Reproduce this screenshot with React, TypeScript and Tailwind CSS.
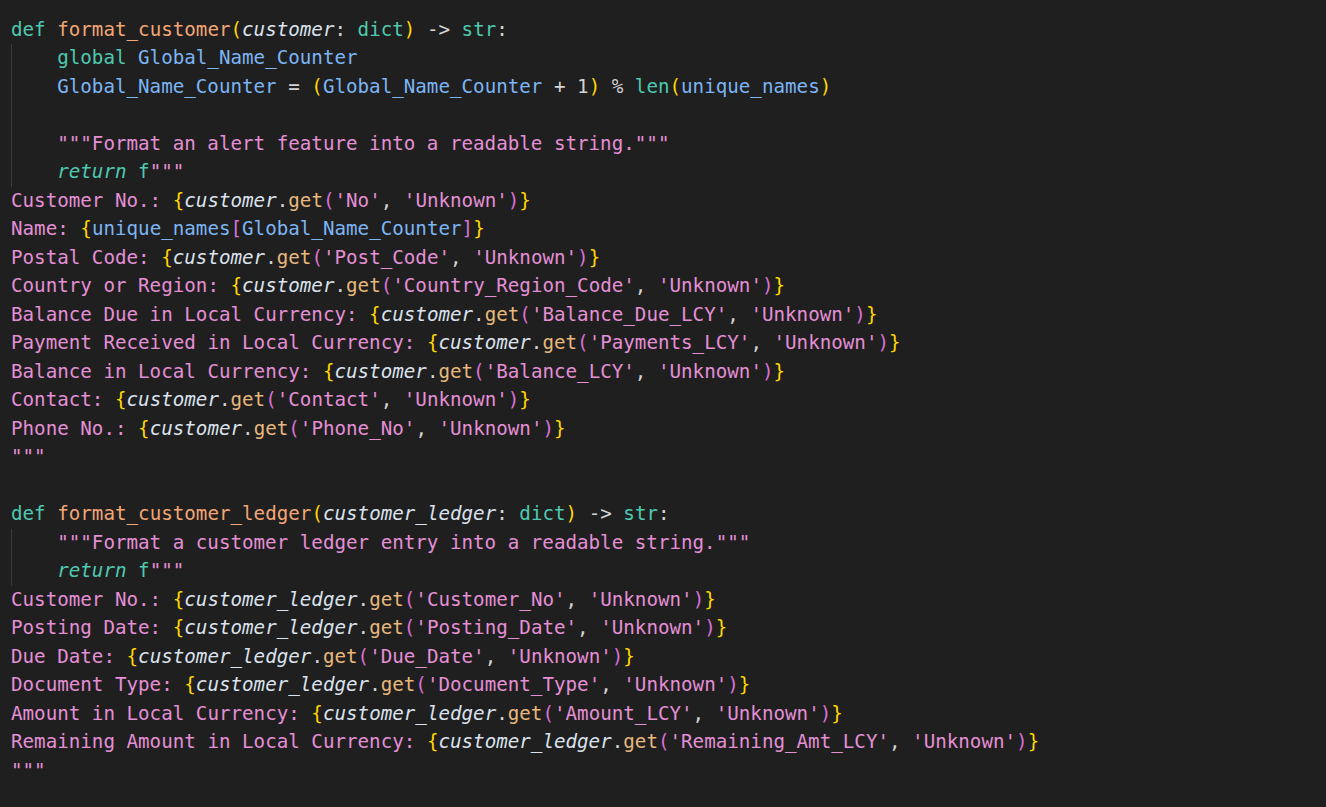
const c = {
  kw: 'text-[#4ec9b0]',
  kwi: 'text-[#4ec9b0] italic',
  fn: 'text-[#f3a675]',
  param: 'text-[#dbe2ee] italic',
  v: 'text-[#7cb5f4]',
  s: 'text-[#e48fd6]',
  y: 'text-[#ffd700]',
  p: 'text-[#da70d6]',
  op: 'text-[#d4d4d4]',
  m: 'text-[#e7b77c]',
}

type Tok = [string, string]
type Line = { indent?: boolean; toks: Tok[] }

const field = (label: string, obj: string, key: string): Line => ({
  toks: [
    [c.s, label + ': '],
    [c.y, '{'],
    [c.param, obj],
    [c.op, '.'],
    [c.m, 'get'],
    [c.p, '('],
    [c.s, `'${key}'`],
    [c.op, ', '],
    [c.s, "'Unknown'"],
    [c.p, ')'],
    [c.y, '}'],
  ],
})

const lines: Line[] = [
  {
    toks: [
      [c.kw, 'def '],
      [c.fn, 'format_customer'],
      [c.y, '('],
      [c.param, 'customer'],
      [c.op, ': '],
      [c.kw, 'dict'],
      [c.y, ')'],
      [c.op, ' -> '],
      [c.kw, 'str'],
      [c.op, ':'],
    ],
  },
  { indent: true, toks: [[c.kw, 'global '], [c.v, 'Global_Name_Counter']] },
  {
    indent: true,
    toks: [
      [c.v, 'Global_Name_Counter'],
      [c.op, ' = '],
      [c.y, '('],
      [c.v, 'Global_Name_Counter'],
      [c.op, ' + '],
      [c.op, '1'],
      [c.y, ')'],
      [c.op, ' % '],
      [c.kw, 'len'],
      [c.y, '('],
      [c.v, 'unique_names'],
      [c.y, ')'],
    ],
  },
  { indent: true, toks: [] },
  { indent: true, toks: [[c.s, '"""Format an alert feature into a readable string."""']] },
  { indent: true, toks: [[c.kwi, 'return'], [c.op, ' '], [c.kw, 'f'], [c.s, '"""']] },
  field('Customer No.', 'customer', 'No'),
  {
    toks: [
      [c.s, 'Name: '],
      [c.y, '{'],
      [c.v, 'unique_names'],
      [c.p, '['],
      [c.v, 'Global_Name_Counter'],
      [c.p, ']'],
      [c.y, '}'],
    ],
  },
  field('Postal Code', 'customer', 'Post_Code'),
  field('Country or Region', 'customer', 'Country_Region_Code'),
  field('Balance Due in Local Currency', 'customer', 'Balance_Due_LCY'),
  field('Payment Received in Local Currency', 'customer', 'Payments_LCY'),
  field('Balance in Local Currency', 'customer', 'Balance_LCY'),
  field('Contact', 'customer', 'Contact'),
  field('Phone No.', 'customer', 'Phone_No'),
  { toks: [[c.s, '"""']] },
  { toks: [] },
  {
    toks: [
      [c.kw, 'def '],
      [c.fn, 'format_customer_ledger'],
      [c.y, '('],
      [c.param, 'customer_ledger'],
      [c.op, ': '],
      [c.kw, 'dict'],
      [c.y, ')'],
      [c.op, ' -> '],
      [c.kw, 'str'],
      [c.op, ':'],
    ],
  },
  { indent: true, toks: [[c.s, '"""Format a customer ledger entry into a readable string."""']] },
  { indent: true, toks: [[c.kwi, 'return'], [c.op, ' '], [c.kw, 'f'], [c.s, '"""']] },
  field('Customer No.', 'customer_ledger', 'Customer_No'),
  field('Posting Date', 'customer_ledger', 'Posting_Date'),
  field('Due Date', 'customer_ledger', 'Due_Date'),
  field('Document Type', 'customer_ledger', 'Document_Type'),
  field('Amount in Local Currency', 'customer_ledger', 'Amount_LCY'),
  field('Remaining Amount in Local Currency', 'customer_ledger', 'Remaining_Amt_LCY'),
  { toks: [[c.s, '"""']] },
]

export default function App() {
  return (
    <div className="h-[807px] w-[1326px] overflow-hidden bg-[#1f1f1f] pl-[11px] pt-[15.5px] font-['DejaVu_Sans_Mono',monospace] text-[19.2px]">
      {lines.map((line, i) => (
        <div key={i} className="flex h-[28.5px] items-center whitespace-pre leading-[28.5px]">
          {line.indent && <span className="h-full w-[46.2px] shrink-0 border-l border-[#3b3b3b]" />}
          {line.toks.map(([cls, text], j) => (
            <span key={j} className={cls}>
              {text}
            </span>
          ))}
        </div>
      ))}
    </div>
  )
}
